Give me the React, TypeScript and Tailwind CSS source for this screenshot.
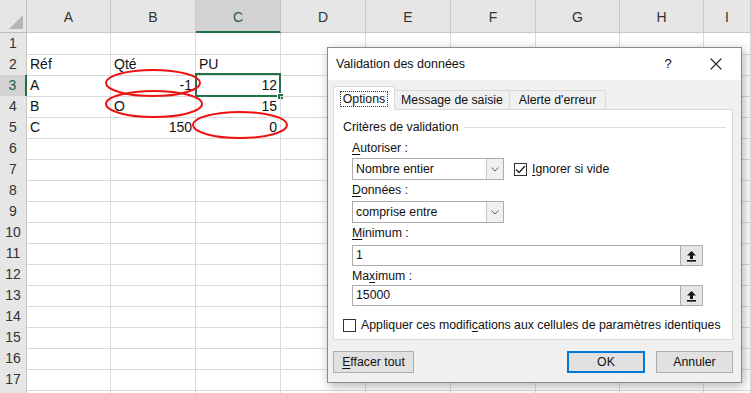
import { Fragment } from 'react'

const COLS = ['A', 'B', 'C', 'D', 'E', 'F', 'G', 'H', 'I']
const GRID = 'grid grid-cols-[27px_84px_85px_85px_85px_85px_85px_84px_84px_1fr]'

type Cell = { v: string; right?: boolean }
const DATA: Record<number, Record<string, Cell>> = {
  2: { A: { v: 'Réf' }, B: { v: 'Qté' }, C: { v: 'PU' } },
  3: { A: { v: 'A' }, B: { v: '-1', right: true }, C: { v: '12', right: true } },
  4: { A: { v: 'B' }, B: { v: 'O' }, C: { v: '15', right: true } },
  5: { A: { v: 'C' }, B: { v: '150', right: true }, C: { v: '0', right: true } },
}

const ui = "font-['Liberation_Sans',Arial,sans-serif]"

function Sheet() {
  return (
    <div className={`${ui} text-[14px] text-[#111]`}>
      {/* column headers */}
      <div className={`${GRID} h-[33px]`}>
        <div className="relative bg-[#e6e6e6] border-r border-b border-[#bdbdbd]">
          <svg className="absolute right-[3px] bottom-[3px]" width="14" height="14" viewBox="0 0 14 14">
            <polygon points="14,0 14,14 0,14" fill="#b5b5b5" />
          </svg>
        </div>
        {COLS.map((c) => (
          <div
            key={c}
            className={
              c === 'C'
                ? 'flex items-end justify-center pb-[3px] bg-[#d2d2d2] text-[#1e5e3a] border-r border-[#c4c4c4] border-b-2 border-b-[#217346]'
                : 'flex items-end justify-center pb-[4px] bg-[#e6e6e6] text-[#333] border-r border-b border-[#c8c8c8]'
            }
          >
            {c}
          </div>
        ))}
      </div>
      {Array.from({ length: 18 }, (_, i) => i + 1).map((r) => (
        <div key={r} className={`${GRID} h-[21px]`}>
          <div
            className={
              r === 3
                ? 'flex items-center justify-center bg-[#d2d2d2] text-[#1e5e3a] border-b border-[#c8c8c8] border-r-2 border-r-[#217346]'
                : 'flex items-center justify-center bg-[#e6e6e6] text-[#333] border-b border-r border-[#c8c8c8]'
            }
          >
            {r <= 17 ? r : ''}
          </div>
          {COLS.map((c) => {
            const cell = DATA[r]?.[c]
            return (
              <div
                key={c}
                className={`relative flex items-center px-[3px] border-r border-b border-[#dadada] ${cell?.right ? 'justify-end' : ''}`}
              >
                {cell?.v}
                {r === 3 && c === 'C' && (
                  <Fragment>
                    <div className="absolute -left-[1px] -top-[2px] -right-[1px] -bottom-[1px] border-2 border-[#217346]" />
                    <div className="absolute -right-[4px] -bottom-[4px] w-[7px] h-[7px] bg-[#217346] border border-white" />
                  </Fragment>
                )}
              </div>
            )
          })}
        </div>
      ))}
    </div>
  )
}

function U({ children }: { children: string }) {
  return <span className="underline underline-offset-2">{children}</span>
}

function Combo({ value }: { value: string }) {
  return (
    <div className="flex w-[152px] h-[22px] border border-[#adadad] bg-white">
      <div className="flex-1 flex items-center pl-[3px]">{value}</div>
      <div className="w-[17px] flex items-center justify-center border-l border-[#c8c8c8] bg-[#f0f0f0]">
        <svg width="8" height="5" viewBox="0 0 8 5">
          <path d="M0.5 0.5 L4 4 L7.5 0.5" fill="none" stroke="#606060" strokeWidth="1" />
        </svg>
      </div>
    </div>
  )
}

function RefInput({ value }: { value: string }) {
  return (
    <div className="flex w-[351px] h-[21px] border border-[#adadad] bg-white">
      <div className="flex-1 flex items-center pl-[3px]">{value}</div>
      <div className="w-[22px] flex items-center justify-center bg-[#e5e5e5] border-l border-[#adadad]">
        <svg width="11" height="12" viewBox="0 0 11 12">
          <path d="M5.5 1 L10 5.5 L7 5.5 L7 9 L4 9 L4 5.5 L1 5.5 Z" fill="#111" />
          <rect x="1" y="10" width="9" height="1.6" fill="#111" />
        </svg>
      </div>
    </div>
  )
}

function Check({ on }: { on?: boolean }) {
  return (
    <div className="w-[13px] h-[13px] border border-[#333] bg-white flex items-center justify-center">
      {on && (
        <svg width="11" height="9" viewBox="0 0 11 9">
          <path d="M1 4.5 L4 7.5 L10 1" fill="none" stroke="#222" strokeWidth="1.3" />
        </svg>
      )}
    </div>
  )
}

function Btn({ children, primary, w }: { children: React.ReactNode; primary?: boolean; w: string }) {
  return (
    <div
      className={`${w} h-[22px] flex items-center justify-center bg-[#e1e1e1] ${
        primary ? 'border-2 border-[#0078d7]' : 'border border-[#adadad]'
      }`}
    >
      {children}
    </div>
  )
}

function Dialog() {
  return (
    <div className={`${ui} absolute left-[327px] top-[47px] w-[415px] h-[336px] flex flex-col border border-[#8a8a8a] bg-[#f0f0f0] text-[12.3px] text-[#111] shadow-[2px_3px_10px_rgba(0,0,0,0.3)]`}>
      {/* title */}
      <div className="h-[32px] flex items-center bg-white pl-[8px]">
        <span className="flex-1 text-[12.5px]">Validation des données</span>
        <span className="w-[20px] text-center text-[13px] mr-[32px]">?</span>
        <svg className="mr-[19px]" width="12" height="12" viewBox="0 0 12 12">
          <path d="M0.5 0.5 L11.5 11.5 M11.5 0.5 L0.5 11.5" stroke="#222" strokeWidth="1.1" />
        </svg>
      </div>
      <div className="flex-1 flex flex-col pl-[5px] pr-[8px] pt-[6px]">
        {/* tabs */}
        <div className="flex items-end h-[24px] relative z-10">
          <div className="w-[62px] h-[24px] bg-white border border-b-0 border-[#d9d9d9] flex items-center justify-center">
            <span className="px-[2px] border border-dotted border-[#333] leading-[14px]">Options</span>
          </div>
          <div className="w-[115px] h-[20px] bg-[#f0f0f0] border border-l-0 border-[#d9d9d9] flex items-center justify-center">
            Message de saisie
          </div>
          <div className="w-[96px] h-[20px] bg-[#f0f0f0] border border-l-0 border-[#d9d9d9] flex items-center justify-center">
            Alerte d'erreur
          </div>
        </div>
        <div className="-mt-px h-[231px] bg-white border border-[#d9d9d9] flex flex-col pl-[9px] pt-[9px]">
          <div className="flex items-center h-[16px] gap-[5px] pr-[6px]">
            <span>Critères de validation</span>
            <div className="flex-1 h-px bg-[#dcdcdc]" />
          </div>
          <div className="pl-[9px] flex flex-col">
            <div className="mt-[5px] h-[16px] leading-[16px]"><U>A</U>utoriser :</div>
            <div className="mt-[2px] flex items-start gap-[10px]">
              <Combo value="Nombre entier" />
              <div className="flex items-center gap-[5px] mt-[2px]">
                <Check on />
                <span><U>I</U>gnorer si vide</span>
              </div>
            </div>
            <div className="mt-[2px] h-[16px] leading-[16px]"><U>D</U>onnées :</div>
            <div className="mt-[3px]"><Combo value="comprise entre" /></div>
            <div className="mt-[2px] h-[16px] leading-[16px]"><U>M</U>inimum :</div>
            <div className="mt-[4px]"><RefInput value="1" /></div>
            <div className="mt-[2px] h-[16px] leading-[16px]">Ma<U>x</U>imum :</div>
            <div className="mt-[1px]"><RefInput value="15000" /></div>
          </div>
          <div className="mt-[10px] flex items-center gap-[5px]">
            <Check />
            <span>Appliquer ces modifi<U>c</U>ations aux cellules de paramètres identiques</span>
          </div>
        </div>
        <div className="mt-[11px] flex items-center">
          <Btn w="w-[81px]"><span><U>E</U>ffacer tout</span></Btn>
          <div className="flex-1" />
          <Btn w="w-[78px]" primary>OK</Btn>
          <div className="w-[11px]" />
          <Btn w="w-[77px]">Annuler</Btn>
        </div>
      </div>
    </div>
  )
}

export default function App() {
  return (
    <div className="relative w-[751px] h-[393px] overflow-hidden bg-white">
      <Sheet />
      {/* red annotation ellipses */}
      <svg className="absolute left-0 top-0 pointer-events-none" width="751" height="393">
        <ellipse cx="153" cy="83" rx="47" ry="13" fill="none" stroke="#ee1111" strokeWidth="2" />
        <ellipse cx="154" cy="104" rx="48" ry="13" fill="none" stroke="#ee1111" strokeWidth="2" />
        <ellipse cx="240" cy="125" rx="47" ry="13" fill="none" stroke="#ee1111" strokeWidth="2" />
      </svg>
      <Dialog />
    </div>
  )
}
